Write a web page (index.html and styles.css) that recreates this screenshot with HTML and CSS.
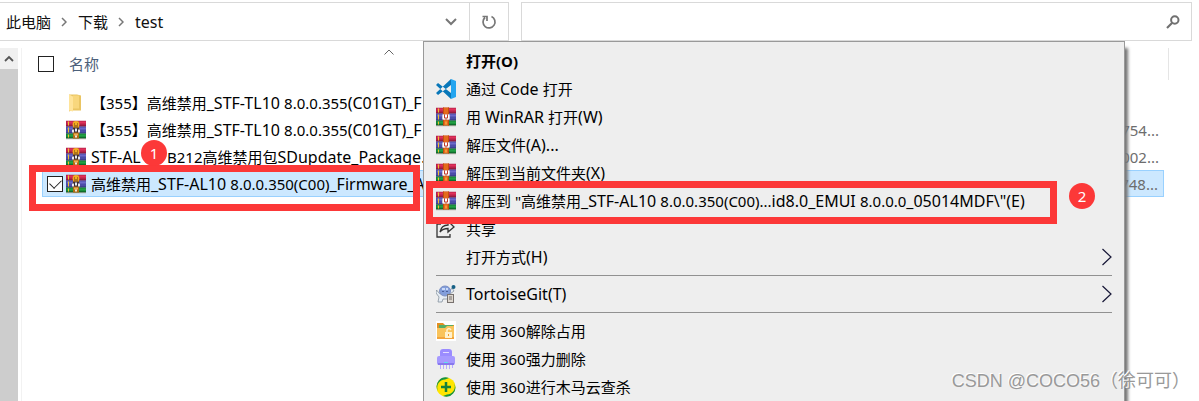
FILE: index.html
```html
<!DOCTYPE html>
<html lang="zh-CN">
<head>
<meta charset="utf-8">
<title>test</title>
<link rel="stylesheet" href="styles.css">
</head>
<body>
<svg class="defs" aria-hidden="true">
  <symbol id="books" viewBox="0 0 20 19">
    <path fill="#b52249" d="M0 0h20v6H0z"/><path fill="#e0305b" d="M1 1h19v2H1z"/><path fill="#7c1434" d="M0 5h20v1H0z"/>
    <path fill="#4b4da8" d="M0 6h20v7H0z"/><path fill="#6c69c9" d="M1 7h19v2H1z"/><path fill="#34357c" d="M0 12h20v1H0z"/>
    <path fill="#168235" d="M0 13h20v5H0z"/><path fill="#22a044" d="M1 14h19v2H1z"/><path fill="#0b5825" d="M0 17h20v1H0z"/>
    <path fill="#b9a7a7" d="M0 18h20v1H0z"/>
    <path fill="#f0c22e" d="M2 1h1v4H2zM2 7h1v5H2zM2 14h1v3H2z"/>
  </symbol>
  <symbol id="rar" viewBox="0 0 20 19">
    <use href="#books"/>
    <path fill="#e56a1c" d="M7 0h6v18H7z"/><path fill="#c24f10" d="M7 0h1v18H7zM12 0h1v18h-1z"/>
    <path fill="#c9c4d6" d="M6 7h8v5H6z"/><path fill="#c23a29" d="M8 7h4v4H8z"/><path fill="#fff" d="M7 7h1v5H7zM12 7h1v5h-1zM9 7h2v3H9zM7 11h2v1H7zM11 11h2v1h-2z"/>
    <path fill="#f29b38" d="M9 14h2v3H9z"/>
  </symbol>
  <symbol id="rar-file" viewBox="0 0 20 19">
    <use href="#books"/>
    <path fill="#b06a12" d="M7 1h6v17H7z"/>
    <circle cx="10" cy="4" r="3.4" fill="#f3ab23"/><path fill="#704010" d="M8 3h1v1H8zM11 3h1v1h-1zM8 5h4v1H8z"/>
    <path fill="#382d34" d="M6 9l2-2h4l2 2v3H6z"/><path fill="#e9e7ed" d="M6 9h2v3H6zM12 9h2v3h-2zM9 8h2v3H9z"/>
    <path fill="#ecad54" d="M8 13h4v2H8z"/><path fill="#ece7dd" d="M9 15h2v2H9z"/>
  </symbol>
  <symbol id="chev" viewBox="0 0 10 18"><path d="M.5 1l8.500 8-8.500 8" fill="none" stroke="#161636" stroke-width="1.200"/></symbol>
  <symbol id="crumb" viewBox="0 0 6 10"><path d="M1 1l4 4-4 4" fill="none" stroke="#777" stroke-width="1.500"/></symbol>
</svg>

<header class="toolbar">
  <nav class="address" aria-label="地址">
    <a href="#">此电脑</a><svg class="crumb"><use href="#crumb"/></svg>
    <a href="#">下载</a><svg class="crumb"><use href="#crumb"/></svg>
    <a href="#" class="latin">test</a>
    <button class="history" aria-label="历史记录"><svg width="12" height="8" viewBox="0 0 12 8"><path d="M1 1l5 5 5-5" fill="none" stroke="#777" stroke-width="2"/></svg></button>
    <button class="refresh" aria-label="刷新"><svg width="16" height="16" viewBox="0 0 16 16"><path d="M10.500 2.500A6 6 0 1 1 4 3.500M1.500 2.500H6V7" fill="none" stroke="#777" stroke-width="1.700"/></svg></button>
  </nav>
  <div class="search">
    <input type="text" aria-label="搜索">
    <button aria-label="开始搜索"><svg width="14" height="14" viewBox="0 0 14 14"><circle cx="8.800" cy="5" r="3.700" fill="none" stroke="#707070" stroke-width="2"/><path d="M6 8L1 13" stroke="#707070" stroke-width="2.200"/></svg></button>
  </div>
</header>

<main class="content">
  <div class="scroll"><button aria-label="向上滚动"><svg width="10" height="7" viewBox="0 0 10 7"><path d="M1 6l4-4 4 4" fill="none" stroke="#555" stroke-width="1.800"/></svg></button></div>
  <div class="pane">
    <table class="files">
      <colgroup><col><col class="size-col"><col class="edge-col"></colgroup>
      <thead>
        <tr>
          <th><div class="head"><input class="tick" type="checkbox" id="all" aria-label="全选"><label for="all">名称</label></div></th>
          <th></th>
          <th><div class="edge"></div></th>
        </tr>
      </thead>
      <tbody>
        <tr><td><div class="file"><svg class="icon" viewBox="0 0 20 19"><path fill="#eac563" d="M3 1h8l4 1v15H6l-3 1z"/><path fill="#ffe49a" d="M3 1l4 2v15l-4-1z"/><path fill="#f8d77d" d="M7 2h6v13H7z"/></svg><span>【355】高维禁用<span class="latin">_STF-TL10 </span>8.0.0.355<span class="latin">(C01GT)_F</span></span></div></td><td></td><td></td></tr>
        <tr><td><div class="file"><svg class="icon"><use href="#rar-file"/></svg><span>【355】高维禁用<span class="latin">_STF-TL10 </span>8.0.0.355<span class="latin">(C01GT)_F</span></span></div></td><td>754...</td><td></td></tr>
        <tr><td><div class="file"><svg class="icon"><use href="#rar-file"/></svg><span class="latin lead">STF-AL</span><span>B212高维禁用包<span class="latin">SDupdate_Package.</span></span></div></td><td>002...</td><td></td></tr>
        <tr class="selected"><td><div class="file"><input class="tick" type="checkbox" checked aria-label="选择文件"><svg class="icon"><use href="#rar-file"/></svg><span>高维禁用<span class="latin">_STF-AL10 </span>8.0.0.350(C00)<span class="latin">_Firmware_A</span></span></div></td><td>748...</td><td></td></tr>
      </tbody>
    </table>
    <svg class="sort" width="10" height="6" viewBox="0 0 10 6"><path d="M.5 5.500L5 1l4.500 4.500" fill="none" stroke="#666"/></svg>
  </div>
</main>

<div class="menu" role="menu">
  <button role="menuitem" class="default"><span class="icon"></span>打开(O)</button>
  <button role="menuitem"><svg class="icon" viewBox="0 0 20 20"><path fill="#0877b9" d="M0 6l2-2 13 10v6zM0 14l2 2L15 6V0z"/><path fill="#24a5ef" d="M15 0l5 2v16l-5 2z"/></svg><span>通过 <span class="latin">Code </span>打开</span></button>
  <button role="menuitem"><svg class="icon"><use href="#rar"/></svg><span>用 <span class="latin">WinRAR </span>打开<span class="latin">(W)</span></span></button>
  <button role="menuitem"><svg class="icon"><use href="#rar"/></svg><span>解压文件<span class="latin">(A)...</span></span></button>
  <button role="menuitem"><svg class="icon"><use href="#rar"/></svg><span>解压到当前文件夹<span class="latin">(X)</span></span></button>
  <button role="menuitem"><svg class="icon"><use href="#rar"/></svg><span>解压到 "高维禁用<span class="latin">_STF-AL10 </span>8.0.0.350(C00)...<span class="latin">id8.0_EMUI </span>8.0.0.0<span class="latin">_05014MDF\"(E)</span></span></button>
  <button role="menuitem"><svg class="icon" viewBox="0 0 20 20" fill="none" stroke="#333" stroke-width="1.300"><path d="M5 5H1v13h13v-3"/><path d="M4 13c1-5 4-7 8-7V2l6 6-6 5V9.500C8 9.500 6 10.500 4 13z"/></svg>共享</button>
  <button role="menuitem"><span class="icon"></span><span>打开方式<span class="latin">(H)</span></span><svg class="more"><use href="#chev"/></svg></button>
  <hr>
  <button role="menuitem"><svg class="icon" viewBox="0 0 20 20"><path fill="#e6edf4" stroke="#7a8794" stroke-width=".7" d="M4 10L.5 6 0 9l3 4-1 5h4l1-3h4l2 2 2-3-1-4 4-3-2-3-3 4z"/><ellipse cx="9" cy="7" rx="5.500" ry="5" fill="#829edb" stroke="#7d90c2"/><path fill="#cbdaf8" d="M6 4h3v2H6zM10 4h2v2h-2z"/><path fill="#4a609c" d="M6 7h2v1H6zM10 7h2v1h-2z"/><circle cx="17.500" cy="3" r="2" fill="#156085"/><path fill="#77716e" d="M11 10h7v9h-7z"/><path fill="#ddd7cf" d="M12 11h5v7h-5z"/><path stroke="#77716e" d="M13 13h3M13 15h3"/></svg><span class="latin">TortoiseGit(T)</span><svg class="more"><use href="#chev"/></svg></button>
  <hr>
  <button role="menuitem"><svg class="icon" viewBox="0 0 20 20"><path fill="#fff" d="M0 0h20v20H0z"/><path fill="#e28f22" d="M1 2h6l2 2h9v4H1z"/><path fill="#55ae65" d="M3 4h14v4H3z"/><path fill="#f9c35b" d="M1 7h8l2-2h7v13H1z"/><path fill="#f2a43c" d="M1 16h17v2H1z"/><path fill="#fff1cd" d="M9 11h7v6H9z"/><path d="M11 11V9q2-3 4 0" fill="none" stroke="#fff1cd" stroke-width="1.500"/><path fill="#ec9b2d" d="M12 13h1v2h-1z"/></svg>使用 360解除占用</button>
  <button role="menuitem"><svg class="icon" viewBox="0 0 20 20"><rect x="4" width="12" height="12" rx="3" fill="#9b8cff"/><rect x="1" y="7" width="18" height="9" rx="2" fill="#a699ff"/><path fill="#8879ed" d="M2 14h16v2H2z"/><path fill="#e2dcff" d="M7 3h6v1H7z"/><path fill="#5fe1ed" d="M8 13h4v1H8z"/><path stroke="#b7aaff" d="M4.500 16v4M7.500 16v4M10.500 16v4M13.500 16v4M16.500 16v3"/></svg>使用 360强力删除</button>
  <button role="menuitem"><svg class="icon" viewBox="0 0 20 20"><circle cx="10" cy="10" r="9.600" fill="#ffe500"/><path fill="#149342" d="M2 14A9 9 0 0 1 13 1L9 2.500A8 8 0 0 0 2 14zM18 6A9 9 0 0 1 7 19l4-1.500A8 8 0 0 0 18 6z"/><path d="M10 5v10M5 10h10" stroke="#16813a" stroke-width="2.500"/></svg>使用 360进行木马云查杀</button>
</div>

<div class="frame frame-one"></div>
<div class="badge badge-one">1</div>
<div class="frame frame-two"></div>
<div class="badge badge-two">2</div>
<div class="watermark">CSDN @COCO56（徐可可）</div>
</body>
</html>
```
FILE: styles.css
```css
* { box-sizing: border-box; }
body {
  margin: 0;
  position: relative;
  height: 100vh;
  display: flex;
  flex-direction: column;
  overflow: hidden;
  background: #fff;
  color: #000;
  font: 15px/20px "Noto Sans", "Noto Sans CJK SC", sans-serif;
}
button { border: 0; padding: 0; background: none; color: inherit; font: inherit; }
svg { display: block; flex: none; }
.defs { position: absolute; width: 0; height: 0; }
.latin { font-size: 16px; }

.toolbar { display: flex; gap: 12px; padding: 2px 7px 0 0; }
.address {
  flex: 0 0 509px;
  display: flex;
  align-items: center;
  height: 39px;
  padding-left: 6px;
  border: 1px solid #d9d9d9;
  border-left: 0;
}
.address a { color: #111; text-decoration: none; }
.crumb { width: 6px; height: 10px; margin: 0 11px 0 10px; }
.history { margin-left: auto; width: 36px; display: grid; place-items: center; }
.refresh { width: 39px; height: 37px; display: grid; place-items: center; border-left: 1px solid #d9d9d9; }
.search { flex: 1; display: flex; align-items: center; height: 39px; border: 1px solid #d9d9d9; padding-right: 11px; }
.search input { flex: 1; min-width: 0; height: 35px; border: 0; outline: 0; font: inherit; }

.content { flex: 1; display: flex; padding-top: 7px; }
.scroll { width: 18px; background: #cdcdcd; }
.scroll button { display: grid; place-items: center; width: 100%; height: 21px; background: #f0f0f0; }
.pane { position: relative; flex: 1; margin-left: 3px; padding: 0 30px 0 20px; border-left: 1px solid #f2f2f2; }
.files { width: 100%; table-layout: fixed; border-collapse: separate; border-spacing: 0; }
.size-col { width: 90px; }
.edge-col { width: 5px; }
th { padding: 0 0 9px; font-weight: 400; text-align: left; }
.head { display: flex; align-items: center; gap: 15px; height: 32px; margin-left: -4px; color: #4c607a; }
.edge { height: 32px; border-right: 1px solid #e5e5e5; }
td { height: 27px; padding: 0; white-space: nowrap; overflow: hidden; }
td:nth-child(2) { padding-right: 5px; text-align: right; color: #6d6d6d; }
.file { display: flex; align-items: center; gap: 5px; padding-left: 24px; }
.lead { width: 71px; }
.selected .file { padding-left: 4px; }
.selected .tick { margin-right: -2px; }
.selected td:nth-child(-n+2) { background: #cce8ff; border: solid #99d1ff; border-width: 1px 0; }
.selected td:first-child { border-left-width: 1px; }
.selected td:nth-child(2) { border-right-width: 1px; }
.tick { appearance: none; position: relative; flex: none; width: 16px; height: 16px; margin: 0; border: 1px solid #222; background: #fff; }
.tick:checked::after {
  content: "";
  position: absolute;
  left: 2px;
  top: 2px;
  width: 10px;
  height: 6px;
  border: solid #222;
  border-width: 0 0 1px 1px;
  transform: rotate(-45deg);
}
.icon { flex: none; width: 20px; height: 20px; }
.sort { position: absolute; left: 362px; top: 1px; }

.menu {
  position: absolute;
  left: 423px;
  right: 74px;
  top: 41px;
  padding: 5px 12px;
  border: 1px solid #999;
  background: #eee;
  box-shadow: 4px 6px 3px -1px #777;
}
.menu button { display: flex; align-items: center; gap: 10px; width: 100%; height: 28px; text-align: left; white-space: nowrap; }
.menu .default { font-weight: 700; }
.menu hr { height: 1px; margin: 4px 0; border: 0; background: #919191; }
.more { width: 10px; height: 18px; margin-left: auto; }

.frame { position: absolute; border: 7px solid #fc3838; }
.frame-one { left: 29px; top: 165px; width: 391px; height: 46px; }
.frame-two { left: 426px; top: 181px; width: 631px; height: 43px; }
.badge {
  position: absolute;
  width: 26px;
  height: 26px;
  border-radius: 50%;
  background: #fc3838;
  color: #fff;
  line-height: 26px;
  text-align: center;
}
.badge-one { left: 141px; top: 140px; }
.badge-two { left: 1069px; top: 183px; }
.watermark {
  position: absolute;
  right: 9px;
  bottom: 8px;
  color: #999;
  font: 18px/24px "Liberation Sans", "Noto Sans CJK SC", sans-serif;
  text-shadow: -1px -1px #fff;
}
```
